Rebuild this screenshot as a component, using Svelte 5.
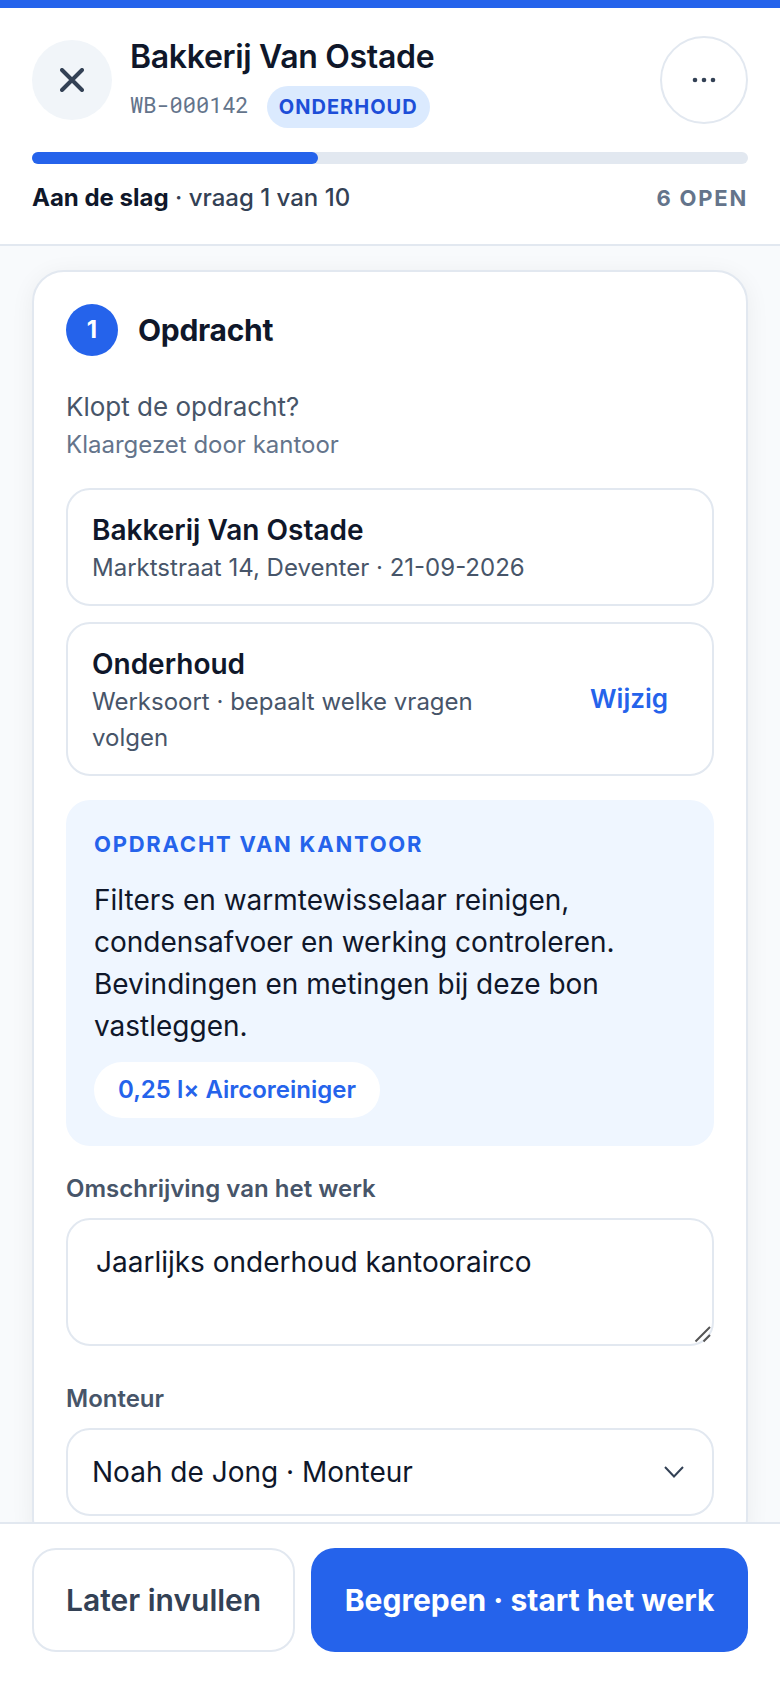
<script lang="ts">
	type Job = {
		customer: string;
		code: string;
		kind: string;
		address: string;
		date: string;
		note: string;
		material: string;
	};

	const job: Job = {
		customer: "Bakkerij Van Ostade",
		code: "WB-000142",
		kind: "Onderhoud",
		address: "Marktstraat 14, Deventer",
		date: "21-09-2026",
		note: "Filters en warmtewisselaar reinigen, condensafvoer en werking controleren. Bevindingen en metingen bij deze bon vastleggen.",
		material: "0,25 l× Aircoreiniger",
	};

	const mechanics = ["Noah de Jong · Monteur"];

	let description = $state("Jaarlijks onderhoud kantoorairco");
	let mechanic = $state(mechanics[0]);
	let question = $state(1);
	let total = 10;
	let open = 6;

	// answered questions drive the bar, not the question on screen
	let progress = $derived(((total - open) / total) * 100);
</script>

<div class="app">
	<header>
		<div class="top">
			<button class="round close" aria-label="Sluiten">
				<svg width="24" height="24" viewBox="0 0 24 24">
					<path d="M2 2 22 22M22 2 2 22" />
				</svg>
			</button>
			<div class="heading">
				<h1>{job.customer}</h1>
				<div class="meta">
					<span class="code">{job.code}</span>
					<span class="badge">{job.kind}</span>
				</div>
			</div>
			<button class="round more" aria-label="Meer opties">
				<svg width="26" height="8" viewBox="0 0 26 8">
					<circle cx="4" cy="4" r="2.3" />
					<circle cx="13" cy="4" r="2.3" />
					<circle cx="22" cy="4" r="2.3" />
				</svg>
			</button>
		</div>
		<div class="track">
			<div class="fill" style="width: {progress}%"></div>
		</div>
		<div class="status">
			<span><strong>Aan de slag</strong> · vraag {question} van {total}</span>
			<span class="open">{open} open</span>
		</div>
	</header>

	<main>
		<section class="card">
			<div class="card-title">
				<span class="number">{question}</span>
				<h2>Opdracht</h2>
			</div>
			<p class="ask">Klopt de opdracht?</p>
			<p class="hint">Klaargezet door kantoor</p>

			<div class="box">
				<div>
					<h3>{job.customer}</h3>
					<p>{job.address} · {job.date}</p>
				</div>
			</div>
			<div class="box">
				<div>
					<h3>{job.kind}</h3>
					<p>Werksoort · bepaalt welke vragen volgen</p>
				</div>
				<button class="change">Wijzig</button>
			</div>

			<div class="note">
				<h4>Opdracht van kantoor</h4>
				<p>{job.note}</p>
				<span class="chip">{job.material}</span>
			</div>

			<label for="description">Omschrijving van het werk</label>
			<div class="field">
				<textarea id="description" rows="2" bind:value={description}></textarea>
				<svg class="grip" width="18" height="18" viewBox="0 0 18 18">
					<path d="M1.500 16.500 16 2M9.500 16.500 16 10" />
				</svg>
			</div>

			<label for="mechanic">Monteur</label>
			<div class="field">
				<select id="mechanic" bind:value={mechanic}>
					{#each mechanics as name}
						<option>{name}</option>
					{/each}
				</select>
				<svg class="chevron" width="22" height="14" viewBox="0 0 22 14">
					<path d="M2 2 11 11.500 20 2" />
				</svg>
			</div>
		</section>
	</main>

	<footer>
		<button class="later">Later invullen</button>
		<button class="start">Begrepen · start het werk</button>
	</footer>
</div>

<style>
	:global(body) {
		margin: 0;
		background: #f8fafc;
	}

	.app {
		display: flex;
		flex-direction: column;
		height: 100vh;
		box-sizing: border-box;
		border-top: 8px solid #2563eb;
		font-family: Inter, "Liberation Sans", sans-serif;
		color: #0f172a;
	}

	h1,
	h2,
	h3,
	h4,
	p {
		margin: 0;
	}

	button,
	textarea,
	select {
		font-family: inherit;
		box-sizing: border-box;
	}

	header {
		background: #ffffff;
		padding: 24px 32px 28px;
		border-bottom: 2px solid #e2e8f0;
	}

	.top {
		display: flex;
		align-items: center;
		gap: 18px;
	}

	.round {
		display: flex;
		flex: none;
		align-items: center;
		justify-content: center;
		padding: 0;
		border-radius: 50%;
	}

	.close {
		width: 80px;
		height: 80px;
		border: none;
		background: #f1f5f9;
	}

	.close path {
		stroke: #334155;
		stroke-width: 4;
		stroke-linecap: round;
	}

	.more {
		width: 88px;
		height: 88px;
		border: 2px solid #e2e8f0;
		background: #ffffff;
		fill: #334155;
	}

	.heading {
		flex: 1;
	}

	h1 {
		font-size: 32px;
		line-height: 50px;
		font-weight: 600;
		letter-spacing: -0.01em;
	}

	.meta {
		display: flex;
		align-items: flex-end;
		gap: 18px;
	}

	.code {
		font-family: "Roboto Mono", "Liberation Mono", monospace;
		font-size: 22px;
		line-height: 46px;
		color: #64748b;
	}

	.badge {
		padding: 0 12px;
		border-radius: 21px;
		background: #dbeafe;
		color: #1d4ed8;
		font-size: 20px;
		line-height: 42px;
		font-weight: 700;
		letter-spacing: 0.05em;
		text-transform: uppercase;
	}

	.track {
		height: 12px;
		margin-top: 24px;
		border-radius: 6px;
		background: #e2e8f0;
	}

	.fill {
		height: 100%;
		border-radius: 6px;
		background: #2563eb;
	}

	.status {
		display: flex;
		justify-content: space-between;
		margin-top: 16px;
		font-size: 24px;
		line-height: 36px;
		font-weight: 500;
		color: #334155;
	}

	.status strong {
		font-weight: 700;
		color: #0f172a;
	}

	.status .open {
		font-size: 22px;
		font-weight: 700;
		letter-spacing: 0.08em;
		text-transform: uppercase;
		color: #64748b;
	}

	main {
		flex: 1;
		min-height: 0;
		overflow-y: auto;
		scrollbar-width: none;
		padding: 24px 32px;
	}

	.card {
		padding: 32px;
		border: 2px solid #e2e8f0;
		border-radius: 32px;
		background: #ffffff;
		box-shadow: 0 4px 24px rgba(15, 23, 42, 0.06);
	}

	.card-title {
		display: flex;
		align-items: center;
		gap: 20px;
		margin-bottom: 32px;
	}

	.number {
		width: 52px;
		border-radius: 50%;
		background: #2563eb;
		color: #ffffff;
		font-size: 24px;
		line-height: 52px;
		font-weight: 700;
		text-align: center;
	}

	h2 {
		font-size: 30px;
		line-height: 40px;
		font-weight: 700;
		letter-spacing: -0.01em;
	}

	.ask {
		font-size: 26px;
		line-height: 38px;
		color: #475569;
	}

	.hint {
		margin-bottom: 24px;
		font-size: 24px;
		line-height: 38px;
		color: #64748b;
	}

	.box {
		display: flex;
		align-items: center;
		justify-content: space-between;
		gap: 24px;
		margin-bottom: 16px;
		padding: 20px 24px 18px;
		border: 2px solid #e2e8f0;
		border-radius: 24px;
	}

	.box h3 {
		font-size: 28px;
		line-height: 40px;
		font-weight: 600;
	}

	.box p {
		font-size: 24px;
		line-height: 36px;
		color: #475569;
	}

	.change {
		padding: 20px 20px 24px;
		border: none;
		background: none;
		color: #2563eb;
		font-size: 26px;
		font-weight: 600;
	}

	.note {
		margin: 24px 0;
		padding: 28px;
		border-radius: 24px;
		background: #eff6ff;
	}

	.note h4 {
		margin-bottom: 19px;
		font-size: 22px;
		line-height: 32px;
		font-weight: 700;
		letter-spacing: 0.08em;
		text-transform: uppercase;
		color: #2563eb;
	}

	.note p {
		margin-bottom: 15px;
		font-size: 28px;
		line-height: 42px;
	}

	.chip {
		display: inline-block;
		padding: 0 24px;
		border-radius: 28px;
		background: #ffffff;
		color: #2563eb;
		font-size: 24px;
		line-height: 56px;
		font-weight: 600;
	}

	label {
		display: block;
		margin-bottom: 11px;
		font-size: 24px;
		line-height: 37px;
		font-weight: 600;
		color: #475569;
	}

	.field {
		position: relative;
		margin-bottom: 34px;
	}

	.field:last-child {
		margin-bottom: 0;
	}

	textarea,
	select {
		display: block;
		width: 100%;
		border: 2px solid #e2e8f0;
		border-radius: 24px;
		background: #ffffff;
		color: #0f172a;
		font-size: 28px;
	}

	textarea {
		height: 128px;
		padding: 21px 28px 19px;
		line-height: 42px;
		resize: none;
	}

	select {
		height: 88px;
		padding: 0 64px 0 24px;
		appearance: none;
	}

	.grip,
	.chevron {
		position: absolute;
		fill: none;
		pointer-events: none;
	}

	.grip {
		right: 2px;
		bottom: 3px;
		stroke: #555555;
		stroke-width: 2;
	}

	.chevron {
		top: 37px;
		right: 29px;
		stroke: #334155;
		stroke-width: 2;
	}

	footer {
		display: flex;
		gap: 16px;
		padding: 24px 32px 36px;
		border-top: 2px solid #e2e8f0;
		background: #ffffff;
	}

	footer button {
		height: 104px;
		padding: 0 32px;
		border-radius: 24px;
		font-size: 30px;
		white-space: nowrap;
	}

	.later {
		border: 2px solid #e2e8f0;
		background: #ffffff;
		color: #334155;
		font-weight: 600;
	}

	.start {
		flex: 1;
		border: none;
		background: #2563eb;
		color: #ffffff;
		font-weight: 700;
	}
</style>
